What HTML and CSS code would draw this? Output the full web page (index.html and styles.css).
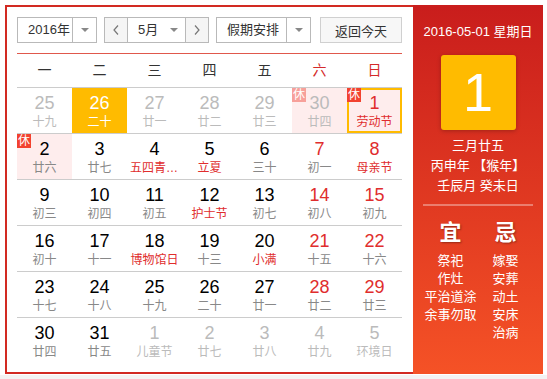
FILE: index.html
```html
<!DOCTYPE html>
<html lang="zh-CN">
<head>
    <meta charset="UTF-8">
    <meta name="viewport" content="width=device-width, initial-scale=1.0">
    <title>万年历</title>
    <link rel="stylesheet" href="styles.css">
</head>
<body>

<div class="calendar">
    <div class="calendar-main">
        <div class="toolbar">
            <div class="select select-year">
                <span class="select-text">2016年</span>
                <span class="select-arrow"></span>
            </div>
            <div class="month-picker">
                <button class="month-btn"><svg width="6" height="10" viewBox="0 0 6 10"><polyline points="5,0.5 1,5 5,9.5" fill="none" stroke="#777" stroke-width="1.2"/></svg></button>
                <div class="month-select">
                    <span class="select-text">5月</span>
                    <span class="select-arrow"></span>
                </div>
                <button class="month-btn"><svg width="6" height="10" viewBox="0 0 6 10"><polyline points="1,0.5 5,5 1,9.5" fill="none" stroke="#777" stroke-width="1.2"/></svg></button>
            </div>
            <div class="select select-holiday">
                <span class="select-text">假期安排</span>
                <span class="select-arrow"></span>
            </div>
            <button class="today-btn">返回今天</button>
        </div>

        <div class="weekdays">
            <span>一</span><span>二</span><span>三</span><span>四</span><span>五</span>
            <span class="is-weekend">六</span><span class="is-weekend">日</span>
        </div>

        <div class="days">
            <!-- row 1 -->
            <div class="day is-other"><div class="day-num">25</div><div class="day-lunar">十九</div></div>
            <div class="day is-other is-today"><div class="day-num">26</div><div class="day-lunar">二十</div></div>
            <div class="day is-other"><div class="day-num">27</div><div class="day-lunar">廿一</div></div>
            <div class="day is-other"><div class="day-num">28</div><div class="day-lunar">廿二</div></div>
            <div class="day is-other"><div class="day-num">29</div><div class="day-lunar">廿三</div></div>
            <div class="day is-other is-holiday"><span class="badge">休</span><div class="day-num">30</div><div class="day-lunar">廿四</div></div>
            <div class="day is-weekend is-holiday is-selected"><span class="badge">休</span><div class="day-num">1</div><div class="day-lunar is-festival">劳动节</div></div>
            <!-- row 2 -->
            <div class="day is-holiday"><span class="badge">休</span><div class="day-num">2</div><div class="day-lunar">廿六</div></div>
            <div class="day"><div class="day-num">3</div><div class="day-lunar">廿七</div></div>
            <div class="day"><div class="day-num">4</div><div class="day-lunar is-festival">五四青年节</div></div>
            <div class="day"><div class="day-num">5</div><div class="day-lunar is-festival">立夏</div></div>
            <div class="day"><div class="day-num">6</div><div class="day-lunar">三十</div></div>
            <div class="day is-weekend"><div class="day-num">7</div><div class="day-lunar">初一</div></div>
            <div class="day is-weekend"><div class="day-num">8</div><div class="day-lunar is-festival">母亲节</div></div>
            <!-- row 3 -->
            <div class="day"><div class="day-num">9</div><div class="day-lunar">初三</div></div>
            <div class="day"><div class="day-num">10</div><div class="day-lunar">初四</div></div>
            <div class="day"><div class="day-num">11</div><div class="day-lunar">初五</div></div>
            <div class="day"><div class="day-num">12</div><div class="day-lunar is-festival">护士节</div></div>
            <div class="day"><div class="day-num">13</div><div class="day-lunar">初七</div></div>
            <div class="day is-weekend"><div class="day-num">14</div><div class="day-lunar">初八</div></div>
            <div class="day is-weekend"><div class="day-num">15</div><div class="day-lunar">初九</div></div>
            <!-- row 4 -->
            <div class="day"><div class="day-num">16</div><div class="day-lunar">初十</div></div>
            <div class="day"><div class="day-num">17</div><div class="day-lunar">十一</div></div>
            <div class="day"><div class="day-num">18</div><div class="day-lunar is-festival">博物馆日</div></div>
            <div class="day"><div class="day-num">19</div><div class="day-lunar">十三</div></div>
            <div class="day"><div class="day-num">20</div><div class="day-lunar is-festival">小满</div></div>
            <div class="day is-weekend"><div class="day-num">21</div><div class="day-lunar">十五</div></div>
            <div class="day is-weekend"><div class="day-num">22</div><div class="day-lunar">十六</div></div>
            <!-- row 5 -->
            <div class="day"><div class="day-num">23</div><div class="day-lunar">十七</div></div>
            <div class="day"><div class="day-num">24</div><div class="day-lunar">十八</div></div>
            <div class="day"><div class="day-num">25</div><div class="day-lunar">十九</div></div>
            <div class="day"><div class="day-num">26</div><div class="day-lunar">二十</div></div>
            <div class="day"><div class="day-num">27</div><div class="day-lunar">廿一</div></div>
            <div class="day is-weekend"><div class="day-num">28</div><div class="day-lunar">廿二</div></div>
            <div class="day is-weekend"><div class="day-num">29</div><div class="day-lunar">廿三</div></div>
            <!-- row 6 -->
            <div class="day"><div class="day-num">30</div><div class="day-lunar">廿四</div></div>
            <div class="day"><div class="day-num">31</div><div class="day-lunar">廿五</div></div>
            <div class="day is-other"><div class="day-num">1</div><div class="day-lunar">儿童节</div></div>
            <div class="day is-other"><div class="day-num">2</div><div class="day-lunar">廿七</div></div>
            <div class="day is-other"><div class="day-num">3</div><div class="day-lunar">廿八</div></div>
            <div class="day is-other"><div class="day-num">4</div><div class="day-lunar">廿九</div></div>
            <div class="day is-other"><div class="day-num">5</div><div class="day-lunar">环境日</div></div>
        </div>
    </div>

    <aside class="calendar-side">
        <div class="side-date">2016-05-01 星期日</div>
        <div class="side-day">1</div>
        <div class="side-lunar">
            <p>三月廿五</p>
            <p>丙申年 【猴年】</p>
            <p>壬辰月 癸未日</p>
        </div>
        <div class="side-divider"></div>
        <div class="side-yiji">
            <div class="yiji-col">
                <div class="yiji-title">宜</div>
                <ul class="yiji-list">
                    <li>祭祀</li>
                    <li>作灶</li>
                    <li>平治道涂</li>
                    <li>余事勿取</li>
                </ul>
            </div>
            <div class="yiji-col">
                <div class="yiji-title">忌</div>
                <ul class="yiji-list">
                    <li>嫁娶</li>
                    <li>安葬</li>
                    <li>动土</li>
                    <li>安床</li>
                    <li>治病</li>
                </ul>
            </div>
        </div>
    </aside>
</div>

<div class="page-bottom"></div>

</body>
</html>
```

FILE: styles.css
```css
* {
    box-sizing: border-box;
}
body {
    margin: 0;
    background: #fff;
    color: #333;
    font-family: "Liberation Sans", Arial, "Noto Sans CJK SC", sans-serif;
}
p, ul {
    margin: 0;
    padding: 0;
    list-style: none;
}
.calendar {
    display: flex;
    width: 538px;
    height: 369px;
    margin: 5px 0 0 5px;
}
.calendar-main {
    flex: 1;
    border: 2px solid #d22a22;
    border-right: 0;
    padding: 10px 11px 0 10px;
}

/* toolbar */
.toolbar {
    display: flex;
    gap: 7px;
    padding-bottom: 10px;
    border-bottom: 1px solid #e0584c;
}
.select, .month-picker {
    display: flex;
    height: 26px;
    border: 1px solid #b9b9b9;
    background: #fff;
    font-size: 13px;
}
.select-text {
    flex: 1;
    line-height: 24px;
    padding-left: 10px;
    color: #333;
}
.select-arrow {
    display: flex;
    align-items: center;
    justify-content: center;
    width: 24px;
    border-left: 1px solid #b9b9b9;
}
.select-arrow::before {
    content: "";
    border-left: 4px solid transparent;
    border-right: 4px solid transparent;
    border-top: 4px solid #888;
}
.select-year {
    width: 80px;
}
.select-holiday {
    width: 95px;
}
.month-picker {
    width: 105px;
}
.month-btn {
    display: flex;
    align-items: center;
    justify-content: center;
    width: 22px;
    padding: 0;
    border: 0;
    background: #f5f5f5;
}
.month-select {
    display: flex;
    flex: 1;
    border-left: 1px solid #b9b9b9;
    border-right: 1px solid #b9b9b9;
}
.month-select .select-arrow {
    border-left: 0;
    width: 22px;
}
.today-btn {
    margin-left: auto;
    width: 82px;
    height: 26px;
    padding: 0;
    border: 1px solid #d0d0d0;
    background: #f7f7f7;
    color: #333;
    font-family: inherit;
    font-size: 13px;
}

/* grid */
.weekdays {
    display: grid;
    grid-template-columns: repeat(7, minmax(0, 1fr));
    height: 34px;
    line-height: 33px;
    border-bottom: 1px solid #ccc;
    text-align: center;
    font-size: 14px;
    color: #333;
}
.weekdays .is-weekend {
    color: #d42a2a;
}
.days {
    display: grid;
    grid-template-columns: repeat(7, minmax(0, 1fr));
}
.day {
    position: relative;
    height: 46px;
    padding-top: 5px;
    border-bottom: 1px solid #ccc;
    text-align: center;
}
.day:nth-last-child(-n+7) {
    border-bottom: 0;
}
.day-num {
    font-size: 18px;
    line-height: 20px;
    color: #000;
}
.day-lunar {
    padding: 0 3px;
    font-size: 12px;
    line-height: 18px;
    color: #888;
    white-space: nowrap;
    overflow: hidden;
    text-overflow: ellipsis;
}
.day.is-weekend .day-num,
.day-lunar.is-festival {
    color: #e02d2d;
}
.day.is-other .day-num,
.day.is-other .day-lunar {
    color: #bbb;
}
.day.is-holiday {
    background: #feeded;
}
.day.is-today {
    background: #ffbb00;
}
.day.is-today .day-num,
.day.is-today .day-lunar {
    color: #fff;
}
.day.is-selected {
    box-shadow: inset 0 0 0 2px #ffbb00;
}
.badge {
    position: absolute;
    top: 0;
    left: 0;
    width: 14px;
    height: 14px;
    background: #f2422f;
    color: #fff;
    font-size: 12px;
    line-height: 14px;
    text-align: center;
}
.day.is-other .badge {
    background: #f7a09a;
}

/* side panel */
.calendar-side {
    width: 130px;
    padding-top: 17px;
    background: linear-gradient(to bottom, #c91d1c, #f55226);
    color: #fff;
    text-align: center;
}
.side-date {
    font-size: 13px;
    line-height: 20px;
}
.side-day {
    width: 75px;
    height: 75px;
    margin: 13px auto 0;
    border-radius: 3px;
    background: #ffbb00;
    box-shadow: 0 1px 4px rgba(0, 0, 0, 0.25);
    font-size: 54px;
    line-height: 75px;
}
.side-lunar {
    margin-top: 6px;
    font-size: 13px;
    line-height: 20px;
}
.side-divider {
    height: 2px;
    margin: 8px 10px 0;
    background: rgba(255, 255, 255, 0.35);
}
.side-yiji {
    display: flex;
    margin: 14px 10px 0;
}
.yiji-col {
    flex: 1;
}
.yiji-title {
    font-size: 22px;
    line-height: 26px;
    font-weight: bold;
    text-shadow: 1px 1px 2px rgba(0, 0, 0, 0.35);
}
.yiji-list {
    margin-top: 6px;
    font-size: 13px;
    line-height: 18px;
}

.page-bottom {
    height: 10px;
    margin-top: 1px;
    background: #f3f3f3;
}
```
